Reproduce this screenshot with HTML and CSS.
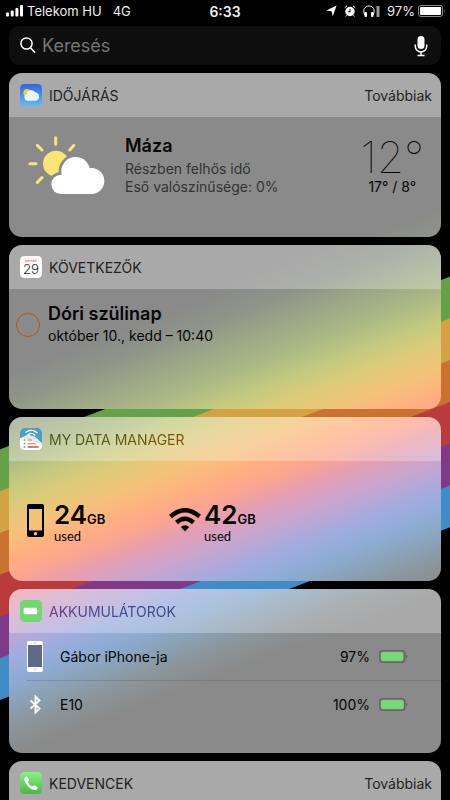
FILE: index.html
```html
<!DOCTYPE html>
<html lang="hu">
<head>
<meta charset="utf-8">
<meta name="viewport" content="width=device-width, initial-scale=1">
<title>Widgetek</title>
<link rel="stylesheet" href="styles.css">
</head>
<body>
<div class="screen">
  <header class="status">
    <div class="status-left">
      <svg class="signal" width="18" height="12" viewBox="0 0 18 12" aria-hidden="true"><rect x="0" y="7.500" width="3" height="4" rx="1"/><rect x="4.700" y="5.500" width="3" height="6" rx="1"/><rect x="9.400" y="3" width="3" height="8.500" rx="1"/><rect x="14" y="0" width="3" height="11.500" rx="1"/></svg>
      <span>Telekom HU</span>
      <span class="network">4G</span>
    </div>
    <time class="clock">6:33</time>
    <div class="status-right">
      <svg width="11" height="12" viewBox="0 0 11 12" aria-hidden="true"><path d="M10.600.600 6.700 11.200 5.600 6.300.300 5.400Z"/></svg>
      <svg class="alarm" width="12" height="12" viewBox="0 0 12 12" aria-hidden="true"><circle cx="6" cy="6.500" r="4.700"/><path class="line" d="M.700 2.800 3 .900M11.300 2.800 9 .900M2.600 10.200 1.700 11.500M9.400 10.200l.9 1.300"/><path class="hand" d="M6 3.800v3H3.800"/></svg>
      <svg class="phones" width="17" height="13" viewBox="0 0 17 13" aria-hidden="true"><path class="arc" d="M1.700 10C-.600 4.500 2 1 6 1s6.600 3.500 4.300 9"/><rect x="1.500" y="7" width="2.500" height="5" rx="1"/><rect x="8" y="7" width="2.500" height="5" rx="1"/><rect class="dim" x="13.500" y="1" width="3" height="11" rx=".5"/></svg>
      <span class="level">97%</span>
      <svg class="cell" width="28" height="12" viewBox="0 0 28 12" aria-hidden="true"><rect class="shell" x=".5" y=".5" width="24" height="11" rx="2.500"/><rect x="2" y="2" width="21" height="8" rx="1"/><path class="nub" d="M26 4q1.500 2 0 4Z"/></svg>
    </div>
  </header>

  <form class="search">
    <svg width="16" height="17" viewBox="0 0 16 17" aria-hidden="true"><circle cx="6.500" cy="6.500" r="5.600"/><path d="m10.500 10.800 4.500 5"/></svg>
    <input type="search" aria-label="Keresés" placeholder="Keresés">
    <button type="button" aria-label="Diktálás"><svg width="14" height="22" viewBox="0 0 14 22" aria-hidden="true"><rect class="fill" x="3.500" y="1" width="7" height="13" rx="3.500"/><path d="M1.300 9.500v1.800a5.700 5.700 0 0 0 11.400 0V9.500M7 17v3.500M3.500 20.500h7"/></svg></button>
  </form>

  <main class="widgets">
    <section class="card">
      <header class="card-head">
        <svg class="app" viewBox="0 0 66 66" aria-hidden="true"><defs><linearGradient id="sky" x2="0" y2="1"><stop stop-color="#2f66df"/><stop offset="1" stop-color="#5fbdf5"/></linearGradient></defs><rect width="66" height="66" rx="13" fill="url(#sky)"/><circle cx="21" cy="26" r="11" fill="#fbc941"/><path d="M22 50a10 10 0 0 1-2-19.500 14 14 0 0 1 26-5 12.500 12.500 0 0 1 2 24.500Z" fill="#eef6fb"/></svg>
        <h2>IDŐJÁRÁS</h2>
        <button class="more" type="button">Továbbiak</button>
      </header>
      <div class="weather">
        <svg width="77" height="59" viewBox="83 198 231 177" aria-hidden="true"><g stroke="#f8e574" stroke-width="9" stroke-linecap="round"><path d="M166 203v20M111 226l14 14M88.500 281.500H107M111 337l14-14M221 226l-13 14"/></g><circle cx="167" cy="281" r="39" fill="#f8e574"/><g stroke="#8a8a8a" stroke-width="16"><circle cx="182" cy="343" r="29"/><circle cx="226" cy="304" r="43"/></g><g fill="#fff"><circle cx="182" cy="343" r="29"/><circle cx="226" cy="304" r="43"/><circle cx="273" cy="333" r="39"/><path d="M182 320h92v52h-92z"/></g></svg>
        <div class="place">
          <h3>Máza</h3>
          <p>Részben felhős idő</p>
          <p>Eső valószínűsége: 0%</p>
        </div>
        <div class="temps">
          <strong>12°</strong>
          <span>17° / 8°</span>
        </div>
      </div>
    </section>

    <section class="card">
      <header class="card-head">
        <svg class="app" viewBox="0 0 66 66" aria-hidden="true"><rect width="66" height="66" rx="13" fill="#fff"/><text class="cal-day" x="33" y="17">péntek</text><text class="cal-num" x="33" y="54">29</text></svg>
        <h2>KÖVETKEZŐK</h2>
      </header>
      <div class="reminder">
        <input id="todo" type="checkbox">
        <label for="todo"><b>Dóri szülinap</b><span>október 10., kedd – 10:40</span></label>
      </div>
    </section>

    <section class="card">
      <header class="card-head">
        <svg class="app" viewBox="0 0 66 66" aria-hidden="true"><rect width="66" height="66" rx="13" fill="#fff"/><path d="M0 28V13A13 13 0 0 1 13 0h40a13 13 0 0 1 13 13v33L43 25 0 30Z" fill="#4b9fc4"/><path d="M2 31 24 19l20 8 22 23V53L48 42 20 34Z" fill="#e4e7e8"/><g fill="none" stroke="#fff" stroke-width="4" stroke-linecap="round"><path d="M18 13q17-13 33 1M25 20q10-8 19 1"/></g><g stroke-width="4"><path d="M11 36h5" stroke="#69ad45"/><path d="M11 47h5" stroke="#469fd0"/><path d="M11 57h5" stroke="#469fd0"/><path d="M23 36h12M23 47h24" stroke="#e39b52"/><path d="M23 57h33" stroke="#cf5140"/></g></svg>
        <h2 class="tint-olive">MY DATA MANAGER</h2>
      </header>
      <div class="usage">
        <div class="meter">
          <svg width="17" height="33" viewBox="0 0 17 33" aria-hidden="true"><path fill-rule="evenodd" d="M2 0h13a2 2 0 0 1 2 2v29a2 2 0 0 1-2 2H2a2 2 0 0 1-2-2V2a2 2 0 0 1 2-2ZM2 5v21.500h13V5ZM8.500 28a1.800 1.800 0 1 0 0 3.600 1.800 1.800 0 0 0 0-3.600Z"/></svg>
          <div><p class="amount">24<small>GB</small></p><p class="caption">used</p></div>
        </div>
        <div class="meter wifi">
          <svg width="32" height="24" viewBox="0 0 32 24" aria-hidden="true"><g fill="none" stroke="#000"><path d="M1.500 8.500Q16-4 30.500 8.500" stroke-width="4.500"/><path d="M7.500 14.500q8.500-7.500 17 0" stroke-width="4.500"/></g><path d="M11.800 19q4.200-3.500 8.400 0L16 23.500Z"/></svg>
          <div><p class="amount">42<small>GB</small></p><p class="caption">used</p></div>
        </div>
      </div>
    </section>

    <section class="card">
      <header class="card-head">
        <svg class="app" viewBox="0 0 66 66" aria-hidden="true"><rect width="66" height="66" rx="13" fill="#70d872"/><rect x="11" y="23" width="40" height="20" rx="3" fill="#fff"/><path d="M53 29q5 4 0 8Z" fill="#fff"/></svg>
        <h2 class="tint-violet">AKKUMULÁTOROK</h2>
      </header>
      <ul class="batteries">
        <li>
          <span class="device"><svg width="16" height="31" viewBox="0 0 16 31" aria-hidden="true"><rect width="16" height="31" rx="2" fill="#fff"/><rect x="1" y="4" width="14" height="22" fill="#5e6a88"/><path d="M6 2.200h4" stroke="#bbb" stroke-width=".7"/><circle cx="8" cy="28.500" r="1.400" fill="none" stroke="#ccc" stroke-width=".6"/></svg></span>
          <span class="name">Gábor iPhone-ja</span><span>97%</span>
          <svg class="charge" width="30" height="13" viewBox="0 0 30 13" aria-hidden="true"><rect class="shell" x=".8" y=".8" width="25" height="11.400" rx="3"/><rect x="2" y="2" width="22" height="9" rx="2"/><path class="nub" d="M27 4.500q3 2 0 4Z"/></svg>
        </li>
        <li>
          <span class="device"><svg width="11" height="19" viewBox="0 0 11 19" aria-hidden="true"><path d="m.5 5.500 9 8-4 4v-16l4 4-9 8" fill="none" stroke="#fff" stroke-width="1.900"/></svg></span>
          <span class="name">E10</span><span>100%</span>
          <svg class="charge" width="30" height="13" viewBox="0 0 30 13" aria-hidden="true"><rect class="shell" x=".8" y=".8" width="25" height="11.400" rx="3"/><rect x="2" y="2" width="22.600" height="9" rx="2"/><path class="nub" d="M27 4.500q3 2 0 4Z"/></svg>
        </li>
      </ul>
    </section>

    <section class="card">
      <header class="card-head">
        <svg class="app" viewBox="0 0 66 66" aria-hidden="true"><defs><linearGradient id="call" x2="0" y2="1"><stop stop-color="#86f383"/><stop offset="1" stop-color="#4cb644"/></linearGradient></defs><rect width="66" height="66" rx="13" fill="url(#call)"/><path d="M13 19c1-4 6-7 9-5l6 9c1 3-5 5-4 8 2 5 7 10 12 12 3 1 5-4 8-3l8 5c3 3-1 8-5 9-7 1-17-4-24-12C17 36 12 27 13 19Z" fill="#fff"/></svg>
        <h2>KEDVENCEK</h2>
        <button class="more" type="button">Továbbiak</button>
      </header>
      <div class="favorites"></div>
    </section>
  </main>
</div>
</body>
</html>
```

FILE: styles.css
```css
* {
  box-sizing: border-box;
  margin: 0;
  padding: 0;
}

body {
  background: #000;
  color: #050505;
  font-family: Inter, "Liberation Sans", sans-serif;
  font-size: 14px;
}

button,
input {
  font: inherit;
  color: inherit;
  background: none;
  border: 0;
}

.screen {
  display: flex;
  flex-direction: column;
  height: 100vh;
  background: linear-gradient(159deg,
    #000 419px,
    #65a148 420px 458px,
    #d3a242 459px 497px,
    #ca7331 498px 536px,
    #b93b3c 537px 575px,
    #7e3a87 576px 614px,
    #3f8cc6 615px 653px,
    #000 654px);
}

/* Status bar */
.status {
  display: grid;
  grid-template-columns: 1fr auto 1fr;
  align-items: center;
  flex: none;
  height: 22px;
  padding: 0 6px;
  color: #eee;
  fill: #fff;
  font-size: 13px;
}

.status-left,
.status-right {
  display: flex;
  align-items: center;
}

.status-left {
  gap: 3px;
}

.network {
  margin-left: 8px;
}

.clock {
  font-weight: 600;
  font-size: 14px;
}

.status-right {
  justify-content: flex-end;
  gap: 7px;
}

.alarm .line,
.alarm .hand,
.phones .arc {
  fill: none;
  stroke: #fff;
}

.alarm .hand {
  stroke: #000;
}

.phones .dim,
.cell .nub {
  fill: #999;
}

.cell {
  margin-left: -4px;
  margin-right: -2px;
}

.cell .shell {
  fill: none;
  stroke: #888;
}

/* Search */
.search {
  display: flex;
  align-items: center;
  flex: none;
  gap: 6px;
  height: 39px;
  margin: 4px 9px 8px;
  padding: 0 13px 0 11px;
  border-radius: 11px;
  background: #0e0e0e;
}

.search svg {
  display: block;
  fill: none;
  stroke: #fff;
  stroke-width: 1.5;
}

.search .fill {
  fill: #fff;
  stroke: none;
}

.search input {
  flex: 1;
  min-width: 0;
  outline: 0;
  color: #fff;
  font-size: 18px;
}

.search input::placeholder {
  color: #757575;
  opacity: 1;
}

/* Widgets */
.widgets {
  display: flex;
  flex-direction: column;
  flex: 1;
  gap: 8px;
  min-height: 0;
  padding: 0 9px;
  overflow-y: auto;
  scrollbar-width: none;
}

.card {
  flex: none;
  min-height: 164px;
  border-radius: 13px;
  overflow: hidden;
  background: linear-gradient(159deg,
    #8a8a8a 350px,
    #8f9489 377px,
    #9eaa87 408px,
    #abb985 432px,
    #c2ca80 456px,
    #dccb79 477px,
    #f4c279 502px,
    #ffb080 525px,
    #fba491 545px,
    #e79fae 562px,
    #cea4c9 582px,
    #b5a8d8 602px,
    #a0acde 618px,
    #8dacd4 640px,
    #8a9fb0 667px,
    #8b9397 688px,
    #8a8a8a 710px) fixed;
}

.card-head {
  display: flex;
  align-items: center;
  gap: 7px;
  height: 44px;
  padding: 0 9px 0 11px;
  background: rgb(255 255 255 / 27%);
  color: #222;
}

.app {
  width: 22px;
  height: 22px;
}

.cal-day,
.cal-num {
  text-anchor: middle;
  font-size: 11px;
  fill: #d44;
}

.cal-num {
  font-size: 40px;
  font-weight: 300;
  fill: #222;
}

.card-head h2 {
  font-size: 14px;
  font-weight: 400;
}

.tint-olive,
.tint-violet {
  color: transparent;
  background: linear-gradient(90deg, #44591c, #7c5510);
  background-clip: text;
}

.tint-violet {
  background-image: linear-gradient(90deg, #703a7c, #42478f 50%, #2d508c);
}

.more {
  margin-left: auto;
}

/* Weather */
.weather {
  display: flex;
  align-items: flex-start;
  padding: 19px 17px 0 19px;
}

.place {
  margin-left: 20px;
  color: #333;
  line-height: 18px;
}

.place h3 {
  margin-bottom: 4px;
  color: #080808;
  font-size: 18px;
  font-weight: 600;
  line-height: 20px;
}

.temps {
  display: flex;
  flex-direction: column;
  align-items: center;
  margin-left: auto;
  line-height: 18px;
}

.temps strong {
  font-size: 44px;
  font-weight: 100;
  line-height: 42px;
}

/* Reminder */
.reminder {
  display: flex;
  align-items: center;
  gap: 8px;
  padding: 14px 7px 0;
}

.reminder input {
  appearance: none;
  width: 24px;
  height: 24px;
  border: 1px solid #b3560e;
  border-radius: 50%;
}

.reminder label {
  display: flex;
  flex-direction: column;
  line-height: 22px;
}

.reminder b {
  font-size: 18px;
  font-weight: 600;
  line-height: 22px;
}

/* Data usage */
.usage {
  display: grid;
  grid-template-columns: 142px 1fr;
  padding: 41px 18px 0;
}

.meter {
  display: flex;
  align-items: flex-start;
  gap: 10px;
}

.meter svg {
  margin-top: 2px;
}

.wifi {
  gap: 3px;
}

.wifi svg {
  margin-top: 6px;
}

.amount {
  font-size: 26px;
  font-weight: 600;
  line-height: 26px;
}

.amount small {
  font-size: 13px;
  line-height: 13px;
}

.caption {
  font-family: Lato, sans-serif;
  font-size: 13px;
  line-height: 16px;
}

/* Batteries */
.batteries {
  list-style: none;
  padding-left: 17px;
}

.batteries li {
  display: flex;
  align-items: center;
  height: 47px;
  padding-right: 32px;
}

.batteries li + li {
  border-top: 1px solid rgb(60 60 60 / 20%);
}

.device {
  display: flex;
  justify-content: center;
  width: 18px;
}

.name {
  flex: 1;
  margin-left: 16px;
}

.charge {
  margin-left: 9px;
  fill: #75d975;
}

.charge .shell {
  fill: none;
  stroke: #666;
  stroke-width: 1.5;
}

.charge .nub {
  fill: #666;
}
```
